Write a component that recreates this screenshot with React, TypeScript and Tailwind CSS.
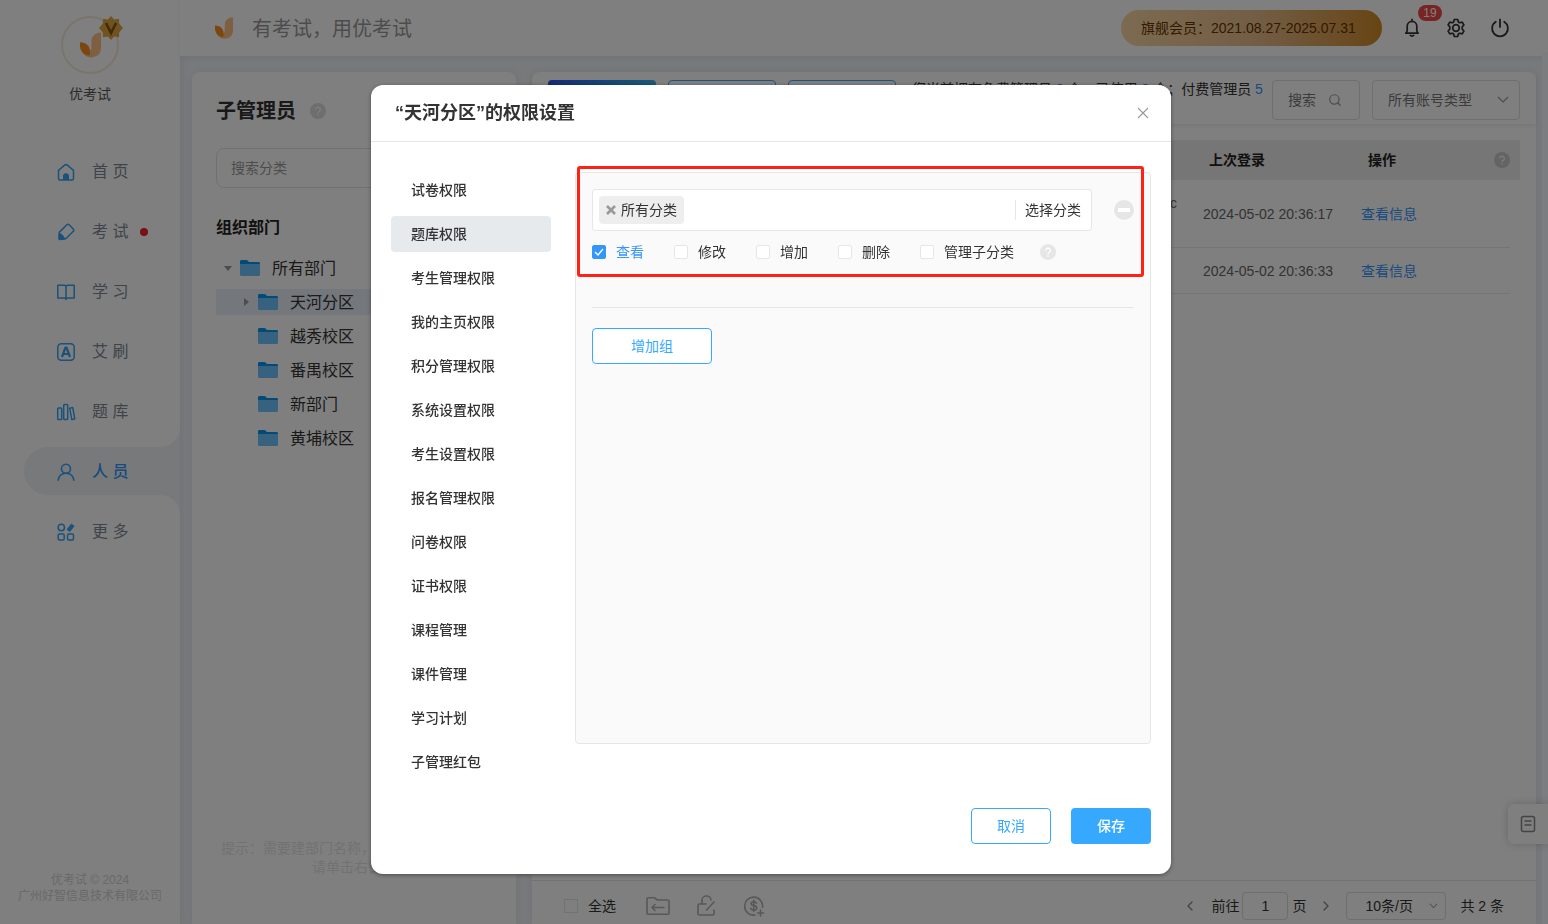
import React from "react";
import { ChevronDown, ChevronLeft, ChevronRight, Search } from "lucide-react";

const FONT = "font-['Liberation_Sans','Noto_Sans_CJK_SC',sans-serif]";

function Leaf({ className }: { className: string }) {
  return (
    <svg viewBox="0 0 22 26" className={className} aria-hidden="true">
      <path d="M22 0v16c0 6-4 10-10 10-5 0-9-3-10-7 6 3 10 1 10-4V9c0-5 4-9 10-9z" fill="#ffbe84" />
      <path d="M0 10c8 0 12 6 10 14C3 24-1 18 0 10z" fill="#f98f1c" />
    </svg>
  );
}

function HomeIcon() {
  return (
    <svg viewBox="0 0 20 20" className="size-5" fill="none" stroke="#36a4f5" strokeWidth="1.5" strokeLinejoin="round">
      <path d="M2.500 8.300 8.600 3.200a2.200 2.200 0 0 1 2.800 0l6.100 5.100V16.500a1.500 1.500 0 0 1-1.500 1.500H4a1.500 1.500 0 0 1-1.500-1.500z" />
      <path d="M7 18v-3.700a3 3 0 0 1 6 0V18z" fill="#36a4f5" stroke="none" />
    </svg>
  );
}
function PenIcon() {
  return (
    <svg viewBox="0 0 20 20" className="size-5" fill="none" stroke="#36a4f5" strokeWidth="1.500" strokeLinejoin="round">
      <path d="M10.800 2.800a1.600 1.600 0 0 1 2.300 0l4.200 4.200a1.600 1.600 0 0 1 0 2.300l-7 7c-.4.400-.8.600-1.400.700l-5 .500a1 1 0 0 1-1-1l.2-5.200c0-.5.200-1 .6-1.400z" />
      <path d="M3 11c2.200.3 5 2.600 6.300 6l-5.500.7a1 1 0 0 1-1-1z" fill="#36a4f5" stroke="none" />
    </svg>
  );
}
function BookIcon() {
  return (
    <svg viewBox="0 0 20 20" className="size-5" fill="none" stroke="#36a4f5" strokeWidth="1.500" strokeLinejoin="round">
      <path d="M1.800 3.200h6.400c1 0 1.800.8 1.800 1.800v12.500c0-.8-.8-1.400-1.800-1.400H1.800zM18.200 3.200h-6.400c-1 0-1.800.8-1.800 1.800v12.500c0-.8.8-1.400 1.800-1.400h6.400z" />
    </svg>
  );
}
function BrushIcon() {
  return (
    <svg viewBox="0 0 20 20" className="size-5" fill="none" stroke="#36a4f5" strokeLinejoin="round">
      <rect x="1.800" y="1.800" width="16.400" height="16.400" rx="3.500" strokeWidth="1.500" />
      <path d="M6 15 9.500 5.500h1L14 15M7.500 12h5" strokeWidth="2.200" />
    </svg>
  );
}
function ShelfIcon() {
  return (
    <svg viewBox="0 0 20 20" className="size-5" fill="none" stroke="#36a4f5" strokeWidth="1.500" strokeLinejoin="round">
      <rect x="1.700" y="6" width="4" height="11.500" rx=".8" />
      <rect x="7.700" y="2.500" width="4" height="15" rx=".8" />
      <path d="m13.700 6.200 3-.6 2.100 11.400-3 .6z" />
    </svg>
  );
}
function UserIcon() {
  return (
    <svg viewBox="0 0 20 20" className="size-5" fill="none" stroke="#36a4f5" strokeWidth="1.600" strokeLinecap="round">
      <circle cx="10" cy="6.800" r="4.500" />
      <path d="M2.200 18.200c.6-4.200 3.500-6.900 7.800-6.900s7.200 2.700 7.800 6.900" />
    </svg>
  );
}
function MoreIcon() {
  return (
    <svg viewBox="0 0 20 20" className="size-5" fill="none" stroke="#36a4f5" strokeWidth="1.500">
      <circle cx="5.300" cy="5.500" r="3.200" />
      <rect x="2.200" y="12" width="6" height="6" rx="1.200" />
      <rect x="11.500" y="12" width="6" height="6" rx="1.200" />
      <path d="m12.200 8.800 4.800-6" strokeWidth="4.200" />
    </svg>
  );
}
function Folder() {
  return (
    <svg viewBox="0 0 20 16" className="h-4 w-5 shrink-0" aria-hidden="true">
      <path d="M0 1.500C0 .6.600 0 1.500 0h4.700c.6 0 1 .2 1.400.600L9 2h9.500c.9 0 1.500.6 1.500 1.500V8H0z" fill="#0695f2" />
      <path d="M0 4h20v10.500c0 .9-.6 1.500-1.500 1.500h-17C.6 16 0 15.400 0 14.500z" fill="#6cc2ff" />
    </svg>
  );
}
function Help({ className }: { className: string }) {
  return (
    <button type="button" aria-label="帮助" className={"flex size-4 shrink-0 items-center justify-center rounded-full " + className}>
      <svg viewBox="0 0 16 16" className="size-4" fill="none" stroke="currentColor" strokeWidth="1.300">
        <path d="M5.700 6.500a2.300 2.300 0 1 1 3.500 2c-.8.500-1.200.8-1.200 1.700M8 11.200v1.300" />
      </svg>
    </button>
  );
}

const nav = [
  { label: "首 页", Icon: HomeIcon },
  { label: "考 试", Icon: PenIcon, dot: true },
  { label: "学 习", Icon: BookIcon },
  { label: "艾 刷", Icon: BrushIcon },
  { label: "题 库", Icon: ShelfIcon },
  { label: "人 员", Icon: UserIcon, active: true },
  { label: "更 多", Icon: MoreIcon },
];

function Sidebar() {
  return (
    <aside className="flex w-[180px] shrink-0 flex-col bg-white shadow-[0_0_10px_rgba(0,0,0,0.08)]">
      <div className="flex flex-col items-center pt-4">
        <div className="relative flex size-[58px] items-center justify-center rounded-full border-2 border-[#f3ead9]">
          <Leaf className="h-[26px] w-[21px]" />
          <svg viewBox="0 0 24 24" className="absolute -top-[2px] -right-[6px] size-6" aria-hidden="true">
            <path d="m12 0 3.200 3.400 4.800-.7.200 4.700L24 12l-3.800 4.600-.2 4.700-4.800-.7L12 24l-3.200-3.400-4.800.7-.2-4.700L0 12l3.800-4.600L4 2.700l4.800.7z" fill="#dfa943" />
            <path d="m7 7 5 10 5-10" fill="none" stroke="#8a5410" strokeWidth="2.600" />
          </svg>
        </div>
        <span className="mt-[10px] text-sm leading-5 text-[#555]">优考试</span>
      </div>
      <nav className="mt-[43px] flex flex-col gap-3">
        {nav.map(({ label, Icon, dot, active }) => (
          <a
            key={label}
            href="#"
            className={
              active
                ? "relative ml-6 flex h-12 items-center rounded-l-full bg-[#f0f2f7] pt-px pl-8 text-base font-medium text-[#3296fa]"
                : "relative ml-6 flex h-12 items-center pt-px pl-8 text-base text-[#7f8794]"
            }
          >
            {active && (
              <>
                <span className="absolute -top-5 right-0 size-5 bg-[#f0f2f7]">
                  <span className="block size-5 rounded-br-full bg-white" />
                </span>
                <span className="absolute right-0 -bottom-5 size-5 bg-[#f0f2f7]">
                  <span className="block size-5 rounded-tr-full bg-white" />
                </span>
              </>
            )}
            <Icon />
            <span className="ml-4">{label}</span>
            {dot && <span className="ml-3 size-2 rounded-full bg-[#f5222d]" />}
          </a>
        ))}
      </nav>
      <div className="mt-auto pb-5 text-center text-xs leading-4 text-[#d2d2d2]">
        <p>优考试 © 2024</p>
        <p>广州好智信息技术有限公司</p>
      </div>
    </aside>
  );
}

function Header() {
  return (
    <header className="flex h-14 shrink-0 items-center bg-white pr-[38px] pl-[35px] shadow-[0_2px_6px_rgba(0,0,0,0.06)]">
      <Leaf className="h-[22px] w-[18px]" />
      <span className="mt-[2px] ml-[19px] text-xl text-[#999]">有考试，用优考试</span>
      <div className="ml-auto flex h-9 w-[261px] items-center rounded-full bg-linear-to-r from-[#f8d6a2] via-[#e6bd8c] to-[#cf8a22] px-5 text-sm whitespace-nowrap text-[#663300]">
        旗舰会员：2021.08.27-2025.07.31
      </div>
      <div className="ml-5 flex gap-6 text-[#333]">
        <button type="button" aria-label="消息" className="relative size-5">
          <svg viewBox="0 0 20 20" className="size-5" fill="none" stroke="currentColor" strokeWidth="1.700" strokeLinejoin="round" strokeLinecap="round">
            <path d="M3.800 15.200c1-.8 1.400-1.700 1.400-3V8.200a4.800 4.800 0 0 1 9.600 0v4c0 1.300.4 2.200 1.400 3zM10 3V1.400M8.300 17.300c.8 1 2.600 1 3.400 0" />
          </svg>
          <span className="absolute -top-[13px] left-[16px] flex h-4 w-6 items-center justify-center rounded-full bg-[#f04848] text-xs text-white">19</span>
        </button>
        <button type="button" aria-label="设置" className="size-5">
          <svg viewBox="0 0 20 20" className="size-5" fill="none" stroke="currentColor" strokeWidth="1.700" strokeLinejoin="round">
            <circle cx="10" cy="10" r="3.300" />
            <path d="M8.300 1.500h3.400l.6 2.400 1.500.9 2.400-.7 1.700 2.900-1.700 1.800v2.400l1.700 1.800-1.700 2.900-2.400-.7-1.500.9-.6 2.400H8.300l-.6-2.400-1.500-.9-2.400.7L2.100 13l1.700-1.800V8.800L2.100 7l1.700-2.900 2.400.7 1.500-.9z" />
          </svg>
        </button>
        <button type="button" aria-label="退出" className="size-5">
          <svg viewBox="0 0 20 20" className="size-5" fill="none" stroke="currentColor" strokeWidth="1.800" strokeLinecap="round">
            <path d="M10 1.500v7.500M5.800 3.800a7.900 7.900 0 1 0 8.400 0" />
          </svg>
        </button>
      </div>
    </header>
  );
}

const children = ["天河分区", "越秀校区", "番禺校区", "新部门", "黄埔校区"];

function Departments() {
  return (
    <section className="flex w-[324px] shrink-0 flex-col rounded-t-lg bg-white px-6 shadow-[0_0_8px_rgba(0,0,0,0.06)]">
      <div className="mt-6 flex items-center gap-[14px]">
        <h1 className="text-xl leading-[30px] font-bold text-[#333]">子管理员</h1>
        <Help className="bg-[#dcdcdc] text-white" />
      </div>
      <input
        aria-label="搜索分类"
        placeholder="搜索分类"
        className="mt-[22px] h-10 rounded-lg border border-[#e2e2e2] px-[14px] text-sm placeholder:text-[#999]"
      />
      <h2 className="mt-7 text-base leading-6 font-bold text-[#222]">组织部门</h2>
      <ul className="mt-[15px] flex flex-col gap-2 text-base text-[#333]">
        <li className="flex h-[26px] items-center">
          <svg viewBox="0 0 8 5" className="ml-2 h-[5px] w-2" aria-hidden="true">
            <path d="M0 0h8L4 5z" fill="#999" />
          </svg>
          <span className="ml-2"><Folder /></span>
          <span className="ml-3 pt-px">所有部门</span>
        </li>
        {children.map((name, i) => (
          <li key={name} className={i === 0 ? "flex h-[26px] items-center bg-[#e8f0fb] pl-[26px]" : "flex h-[26px] items-center pl-[26px]"}>
            <svg viewBox="0 0 10 8" className="h-2 w-[10px]" aria-hidden="true">
              {i === 0 && <path d="M2 0v8l5-4z" fill="#999" />}
            </svg>
            <span className="ml-[6px]"><Folder /></span>
            <span className="ml-3 pt-px">{name}</span>
          </li>
        ))}
      </ul>
      <p className="mt-auto pb-[47px] text-center text-sm leading-[19px] whitespace-nowrap text-[#e4e4e4]">
        提示：需要建部门名称，可选择上级部门，
        <br />
        请单击右键。
      </p>
    </section>
  );
}

const rows = [
  { account: ["tianhefenqu.c", " "], time: "2024-05-02 20:36:17", h: "h-[68px]" },
  { account: [""], time: "2024-05-02 20:36:33", h: "h-[46px]" },
];

function Accounts() {
  return (
    <section className="flex min-w-0 flex-1 flex-col rounded-t-lg bg-white shadow-[0_0_8px_rgba(0,0,0,0.06)]">
      <div className="flex h-[52px] items-center gap-3 px-4 pt-1 text-sm shadow-[0_2px_4px_rgba(0,0,0,0.08)]">
        <button type="button" className="h-10 w-[108px] shrink-0 rounded bg-linear-to-r from-[#2f54eb] to-[#36b4e8] text-white">添加管理员</button>
        <button type="button" className="h-10 w-[108px] shrink-0 rounded border border-[#36a9ff] text-[#36a9ff]">批量导入</button>
        <button type="button" className="h-10 w-[108px] shrink-0 rounded border border-[#36a9ff] text-[#36a9ff]">权限设置</button>
        <p className="-mr-2 ml-1 min-w-0 flex-1 leading-[22px] text-[#333]">
          您当前拥有免费管理员 <b className="font-normal text-[#3296fa]">0</b> 个，已使用 <b className="font-normal text-[#3296fa]">0</b> 个；付费管理员{" "}
          <b className="font-normal text-[#3296fa]">5</b> 个，已使用 <b className="font-normal text-[#3296fa]">2</b> 个
        </p>
        <button type="button" className="flex h-10 w-[88px] shrink-0 items-center rounded border border-[#dedede] pl-[15px] text-[#777]">
          搜索
          <Search className="ml-3 size-[14px] text-[#999]" strokeWidth={2} />
        </button>
        <div className="relative shrink-0">
          <select aria-label="账号类型" className="block h-10 w-[148px] appearance-none rounded border border-[#dedede] pl-[15px] text-[#777]">
            <option>所有账号类型</option>
          </select>
          <svg viewBox="0 0 12 8" className="pointer-events-none absolute top-4 right-[11px] h-2 w-3" fill="none" stroke="#999" strokeWidth="1.200" aria-hidden="true">
            <path d="m1 1 5 5 5-5" />
          </svg>
        </div>
      </div>
      <div className="flex-1 px-4 pt-4">
        <table className="w-full table-fixed border-separate border-spacing-0 text-left text-sm">
          <colgroup>
            <col />
            <col className="w-[160px]" />
            <col className="w-[159px]" />
            <col className="w-[158px]" />
            <col className="w-[10px]" />
          </colgroup>
          <thead>
            <tr className="h-10 bg-[#ececec] text-[#222]">
              <th className="pl-4">姓名</th>
              <th className="pl-4">账号</th>
              <th className="pl-4">上次登录</th>
              <th className="pl-4" colSpan={2}>
                <span className="flex items-center justify-between pr-[10px]">
                  操作
                  <Help className="bg-[#c8c8c8] text-white" />
                </span>
              </th>
            </tr>
          </thead>
          <tbody>
            {rows.map((r) => (
              <tr key={r.time} className={r.h + " text-[#666]"}>
                <td className="border-b border-[#eaeaea] pl-[10px]">管理员</td>
                <td className="border-b border-[#eaeaea] pr-4 text-right leading-[22px]">
                  {r.account.map((line) => (
                    <span key={line} className="block min-h-[22px]">{line}</span>
                  ))}
                </td>
                <td className="border-b border-[#eaeaea] pl-[10px]">{r.time}</td>
                <td className="border-b border-[#eaeaea] pl-[9px]">
                  <a href="#" className="text-[#3296fa]">查看信息</a>
                </td>
                <td />
              </tr>
            ))}
          </tbody>
        </table>
      </div>
      <div className="flex h-11 shrink-0 items-center border-t border-[#e4e4e4] pt-[6px] pr-8 pl-8 text-sm text-[#333]">
        <label className="flex items-center gap-[10px]">
          <input type="checkbox" className="size-[14px] appearance-none border border-[#e4e4e4]" />
          全选
        </label>
        <div className="ml-[30px] flex items-center gap-[26px] text-[#b0b0b0]">
          <button type="button" aria-label="移动">
            <svg viewBox="0 0 24 20" className="h-5 w-6" fill="none" stroke="currentColor" strokeWidth="1.600" strokeLinejoin="round" strokeLinecap="round">
              <path d="M1 3c0-.8.500-1.300 1.300-1.300h6l3 2.300h10.400c.8 0 1.300.5 1.300 1.300V17c0 .8-.5 1.300-1.300 1.300H2.300C1.500 18.300 1 17.800 1 17zM6 11.500h12M9 8.500l-3 3 3 3" />
            </svg>
          </button>
          <button type="button" aria-label="解锁">
            <svg viewBox="0 0 20 22" className="h-[22px] w-5" fill="none" stroke="currentColor" strokeWidth="1.600" strokeLinejoin="round" strokeLinecap="round">
              <path d="M10 9H3.500C2.500 9 2 9.500 2 10.500v8c0 1 .5 1.500 1.500 1.500h13c1 0 1.500-.5 1.500-1.500V15M6 9V6a4.500 4.500 0 0 1 9-1M10.500 15 18 7" />
            </svg>
          </button>
          <button type="button" aria-label="充值" className="ml-px">
            <svg viewBox="0 0 22 22" className="size-[22px]" fill="none" stroke="currentColor" strokeWidth="1.600" strokeLinecap="round">
              <path d="M19.500 12.500A9 9 0 1 0 12 20M17.500 15v6M14.500 18h6" />
              <path d="M13.500 8.200c-.5-1-1.400-1.500-2.700-1.500-3.600 0-3.600 3.700 0 3.900 3.900.3 3.900 4.400 0 4.400-1.500 0-2.500-.6-3-1.700M10.700 5.200v11.300" />
            </svg>
          </button>
        </div>
        <div className="ml-auto flex items-center whitespace-nowrap">
          <button type="button" aria-label="上一页">
            <ChevronLeft className="size-4 text-[#888]" />
          </button>
          <label htmlFor="page" className="ml-[13px]">前往</label>
          <input id="page" defaultValue="1" className="ml-[3px] h-7 w-[46px] rounded border border-[#dcdcdc] text-center" />
          <span className="ml-1">页</span>
          <button type="button" aria-label="下一页" className="ml-3">
            <ChevronRight className="size-4 text-[#888]" />
          </button>
          <div className="relative ml-3">
            <select aria-label="每页条数" className="block h-7 w-[100px] appearance-none rounded border border-[#dcdcdc] pl-[18px]">
              <option>10条/页</option>
            </select>
            <svg viewBox="0 0 12 8" className="pointer-events-none absolute top-[11px] right-2 h-[6px] w-[9px]" fill="none" stroke="#999" strokeWidth="1.400" aria-hidden="true">
              <path d="m1 1 5 5 5-5" />
            </svg>
          </div>
          <span className="ml-[14px]">共 2 条</span>
        </div>
      </div>
    </section>
  );
}

const menu = [
  "试卷权限", "题库权限", "考生管理权限", "我的主页权限", "积分管理权限", "系统设置权限", "考生设置权限",
  "报名管理权限", "问卷权限", "证书权限", "课程管理", "课件管理", "学习计划", "子管理红包",
];

const perms = ["查看", "修改", "增加", "删除", "管理子分类"];

function PermissionDialog() {
  return (
    <div role="dialog" aria-modal="true" aria-labelledby="dialog-title" className="w-[800px] rounded-xl bg-white text-sm text-[#333] shadow-[0_1px_4px_rgba(0,0,0,0.4)]">
      <div className="flex h-[57px] items-center justify-between border-b border-[#e6e6e6] pr-[22px] pl-6">
        <h2 id="dialog-title" className="text-lg font-bold">“天河分区”的权限设置</h2>
        <button type="button" aria-label="关闭">
          <svg viewBox="0 0 12 12" className="size-3" stroke="#999" strokeWidth="1.100">
            <path d="m1 1 10 10M11 1 1 11" />
          </svg>
        </button>
      </div>
      <div className="flex gap-6 px-5 pt-[30px]">
        <div className="flex w-[160px] shrink-0 flex-col gap-2">
          {menu.map((m) => (
            <button
              key={m}
              type="button"
              className={
                m === "题库权限"
                  ? "h-9 rounded bg-[#e6eaed] pl-5 text-left font-medium"
                  : "h-9 rounded pl-5 text-left font-medium"
              }
            >
              {m}
            </button>
          ))}
        </div>
        <div className="relative mb-9 min-w-0 flex-1 rounded border border-[#e6e6e6] bg-[#fafafa] p-4">
          <div className="flex items-center gap-[22px]">
            <div className="flex h-[42px] w-[500px] items-center rounded-[3px] border border-[#e6e6e6] bg-white px-[6px]">
              <span className="flex h-7 items-center rounded bg-[#eee] px-[7px]">
                <button type="button" aria-label="移除">
                  <svg viewBox="0 0 10 10" className="size-[10px]" stroke="#999" strokeWidth="2.600">
                    <path d="m1 1 8 8M9 1 1 9" />
                  </svg>
                </button>
                <span className="ml-[5px]">所有分类</span>
              </span>
              <button type="button" className="ml-auto flex h-5 items-center border-l border-[#e6e6e6] pr-1 pl-[9px]">选择分类</button>
            </div>
            <button type="button" aria-label="删除组" className="flex size-5 shrink-0 items-center justify-center rounded-full bg-[#e6e6e6]">
              <span className="h-1 w-3 bg-white" />
            </button>
          </div>
          <div className="mt-[11px] flex h-5 items-center gap-[30px]">
            {perms.map((p, i) => (
              <label key={p} className={i === 0 ? "flex items-center gap-[10px] text-[#3296fa]" : "flex items-center gap-[10px]"}>
                <span className="relative size-[14px]">
                  <input
                    type="checkbox"
                    defaultChecked={i === 0}
                    className="peer block size-[14px] appearance-none rounded-xs border border-[#e6e6e6] bg-white checked:border-[#3296fa] checked:bg-[#3296fa]"
                  />
                  <svg viewBox="0 0 14 14" className="pointer-events-none absolute inset-0 hidden size-[14px] peer-checked:block" fill="none" stroke="#fff" strokeWidth="1.300">
                    <path d="m3 7 3 3 5-6" />
                  </svg>
                </span>
                {p}
              </label>
            ))}
            <Help className="-ml-1 bg-[#e6e6e6] text-white" />
          </div>
          <hr className="mt-[45px] border-[#e6e6e6]" />
          <button type="button" className="mt-5 h-9 w-[120px] rounded border border-[#36a9ff] bg-white text-[#36a9ff]">增加组</button>
          <div className="pointer-events-none absolute -top-[7px] right-[6px] left-px h-[111px] rounded-[3px] border-3 border-[#ff2116]" />
        </div>
      </div>
      <div className="mt-7 flex justify-end gap-5 px-5 pb-[30px]">
        <button type="button" className="h-9 w-20 rounded border border-[#36a9ff] text-[#36a9ff]">取消</button>
        <button type="button" className="h-9 w-20 rounded bg-[#36a9ff] font-medium text-white">保存</button>
      </div>
    </div>
  );
}

export default function App() {
  return (
    <div lang="zh-CN" className={"relative flex h-screen overflow-hidden bg-[#f0f2f7] " + FONT}>
      <Sidebar />
      <div className="flex min-w-0 flex-1 flex-col">
        <Header />
        <main className="flex min-h-0 flex-1 gap-4 pt-4 pr-3 pl-3">
          <Departments />
          <Accounts />
        </main>
      </div>
      <div className="absolute top-[52px] right-0 bottom-0 w-[6px] bg-[#f8faff]" />
      <button
        type="button"
        aria-label="帮助文档"
        className="absolute right-0 bottom-20 flex h-10 w-10 items-center justify-center rounded-l-md bg-white text-[#888] shadow-[0_0_10px_rgba(0,0,0,0.2)]"
      >
        <svg viewBox="0 0 16 18" className="h-[18px] w-4" fill="none" stroke="currentColor" strokeWidth="1.500">
          <rect x="1.500" y="1.500" width="13" height="15" rx="2" />
          <path d="M4.500 6h7M4.500 10h7" />
        </svg>
      </button>
      <div className="fixed inset-0 flex items-start justify-center overflow-auto bg-black/50 pt-[85px] pr-[6px]">
        <PermissionDialog />
      </div>
    </div>
  );
}
